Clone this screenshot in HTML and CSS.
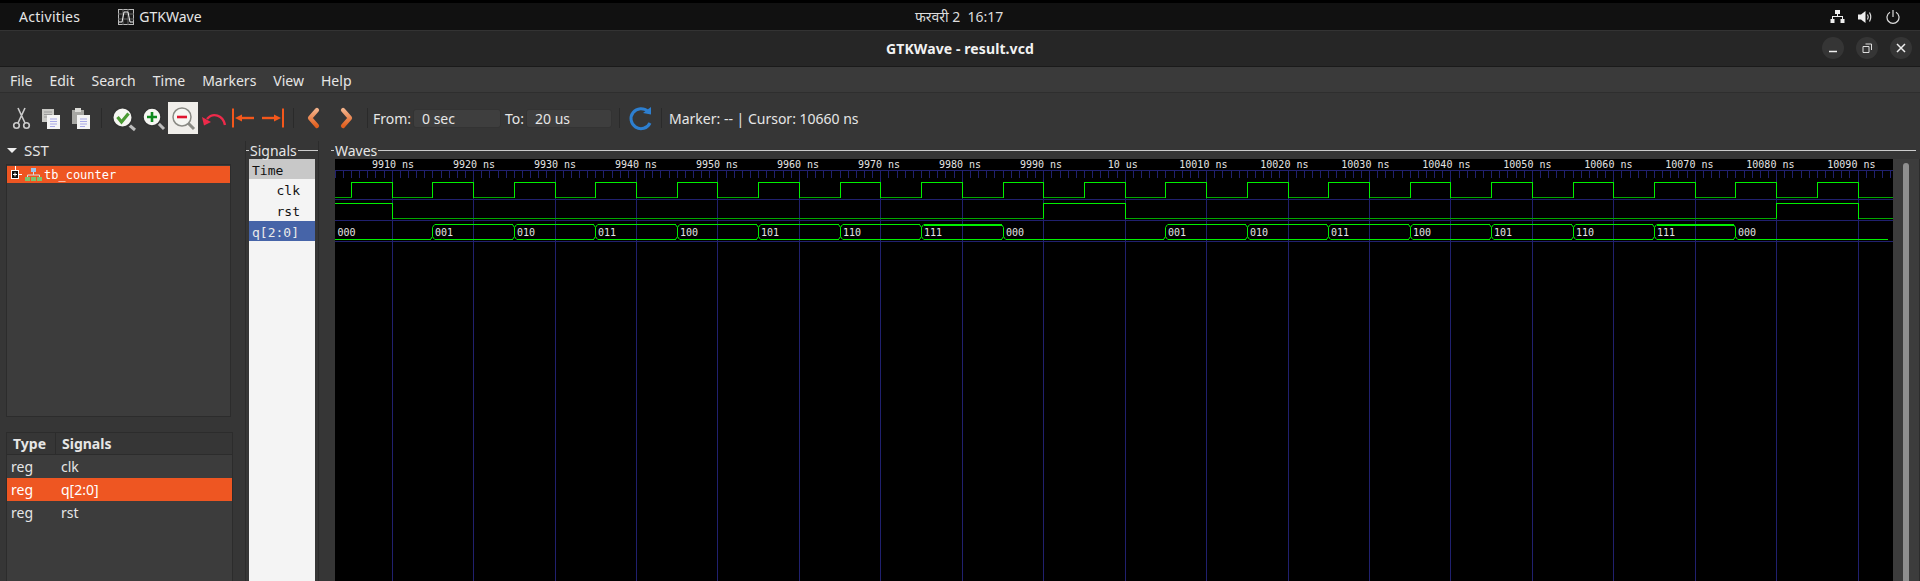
FILE: index.html
```html
<!DOCTYPE html>
<html>
    <head>
        <title>GTKWave - result.vcd</title>
        <link rel="stylesheet" href="styles.css">
    </head>
    <body>
        <div class="topbar">
            <span class="activities">Activities</span>
            <span class="app-name">
                <svg class="app-icon" width="16" height="16" viewBox="0 0 16 16">
                    <rect x="0.5" y="0.5" width="15" height="15" fill="#1c1c1c" stroke="#bbb"/>
                    <path d="M0 5H16M0 10H16M5 0V16M10 0V16" stroke="#666"/>
                    <path d="M1 13H4L6 3H10L12 13H15" fill="none" stroke="#eee"/>
                </svg>
                GTKWave
            </span>
            <span class="clock">फरवरी 2&nbsp;&nbsp;16:17</span>
            <span class="tray">
                <svg width="15" height="14" viewBox="0 0 15 14">
                    <path d="M5 0H10V4H8V6H13V9H14.500V13H10.500V9H12V7H3V9H4.500V13H0.500V9H2V6H7V4H5Z" fill="#eee"/>
                </svg>
                <svg width="15" height="14" viewBox="0 0 15 14">
                    <path d="M0 4.500H3L7.500 1V13L3 9.500H0Z" fill="#eee"/>
                    <path d="M9.500 4.500Q11 7 9.500 9.500M11.500 2.500Q14 7 11.500 11.500" fill="none" stroke="#ddd" stroke-width="1.200"/>
                </svg>
                <svg width="14" height="14" viewBox="0 0 14 14">
                    <path d="M4 2.200A6 6 0 1 0 10 2.200M7 0V7" fill="none" stroke="#ddd" stroke-width="1.200"/>
                </svg>
            </span>
        </div>

        <div class="titlebar">
            <span class="title">GTKWave - result.vcd</span>
            <span class="win-buttons">
                <span class="win-btn">
                    <svg width="10" height="10" viewBox="0 0 10 10"><path d="M1 8.500H9" stroke="#eee" stroke-width="1.500"/></svg>
                </span>
                <span class="win-btn">
                    <svg width="10" height="10" viewBox="0 0 10 10"><path d="M1 3.500H7V9.500H1ZM3.500 1H9.500V7" fill="none" stroke="#ddd"/></svg>
                </span>
                <span class="win-btn">
                    <svg width="10" height="10" viewBox="0 0 10 10"><path d="M1 1L9 9M9 1L1 9" stroke="#eee" stroke-width="1.500"/></svg>
                </span>
            </span>
        </div>

        <div class="menubar">
            <span>File</span><span>Edit</span><span>Search</span><span>Time</span><span>Markers</span><span>View</span><span>Help</span>
        </div>

        <div class="toolbar">
            <span class="tool">
                <svg width="30" height="32" viewBox="0 0 30 32">
                    <path d="M12 6L19 21M19 6L12 21" stroke="#ccc" stroke-width="1.600" fill="none"/>
                    <circle cx="10.500" cy="23.500" r="2.800" fill="none" stroke="#ccc" stroke-width="1.600"/>
                    <circle cx="20.500" cy="23.500" r="2.800" fill="none" stroke="#ccc" stroke-width="1.600"/>
                </svg>
            </span>
            <span class="tool">
                <svg width="30" height="32" viewBox="0 0 30 32">
                    <path d="M6 7H18V20H6Z" fill="#c9c9c5"/>
                    <path d="M8 10H16M8 12.500H16M8 15H16" stroke="#999"/>
                    <path d="M11 13H24V27H11Z" fill="#f4f4f4"/>
                    <path d="M14 17H21M14 19.500H21M14 22H21M14 24.500H19" stroke="#a8a8e8"/>
                </svg>
            </span>
            <span class="tool">
                <svg width="30" height="32" viewBox="0 0 30 32">
                    <path d="M6 8H18V22H6Z" fill="#a8a8a4"/>
                    <path d="M9 6H15V10H9Z" fill="#dcdcd8"/>
                    <path d="M11 13H24V27H11Z" fill="#f4f4f4"/>
                    <path d="M14 17H21M14 19.500H21M14 22H21M14 24.500H19" stroke="#a8a8e8"/>
                </svg>
            </span>
            <span class="sep"></span>
            <span class="tool tool-after-sep">
                <svg width="30" height="32" viewBox="0 0 30 32">
                    <path d="M20 22L27 28" stroke="#bbb" stroke-width="3"/>
                    <circle cx="14.500" cy="15.500" r="10" fill="#f6f6f2" stroke="#333" stroke-width="2"/>
                    <path d="M9.500 15L13.500 20L20.500 11.500" fill="none" stroke="#4a9a32" stroke-width="3.200"/>
                </svg>
            </span>
            <span class="tool">
                <svg width="30" height="32" viewBox="0 0 30 32">
                    <path d="M20 21L26 27" stroke="#bbb" stroke-width="3"/>
                    <circle cx="14" cy="15" r="9" fill="#f6f6f2" stroke="#333" stroke-width="1.500"/>
                    <path d="M14 10V20M9 15H19" stroke="#0f8a1e" stroke-width="2.600"/>
                </svg>
            </span>
            <span class="tool tool-active">
                <svg width="30" height="32" viewBox="0 0 30 32">
                    <path d="M20 21L26 27" stroke="#8a8a84" stroke-width="3"/>
                    <circle cx="14" cy="15" r="9" fill="#f6f6f2" stroke="#8a8a84" stroke-width="1.500"/>
                    <path d="M9 15H19" stroke="#e0142e" stroke-width="2.600"/>
                </svg>
            </span>
            <span class="tool">
                <svg width="30" height="32" viewBox="0 0 30 32">
                    <path d="M27 23C25 13 15 10 9 17" fill="none" stroke="#ee2a4a" stroke-width="2.400"/>
                    <path d="M4 15L6 23.500L13 20Z" fill="#ee2a4a"/>
                </svg>
            </span>
            <span class="tool">
                <svg width="30" height="32" viewBox="0 0 30 32">
                    <path d="M5 6.500V25.500" stroke="#f4571b" stroke-width="2"/>
                    <path d="M12 16H26" stroke="#f4571b" stroke-width="2.400"/>
                    <path d="M7 16L14 12.500V19.500Z" fill="#f4571b"/>
                </svg>
            </span>
            <span class="tool">
                <svg width="30" height="32" viewBox="0 0 30 32">
                    <path d="M25 6.500V25.500" stroke="#f4571b" stroke-width="2"/>
                    <path d="M4 16H18" stroke="#f4571b" stroke-width="2.400"/>
                    <path d="M23 16L16 12.500V19.500Z" fill="#f4571b"/>
                </svg>
            </span>
            <span class="sep"></span>
            <span class="tool">
                <svg width="30" height="32" viewBox="0 0 30 32">
                    <defs>
                        <linearGradient id="chev" x1="0" y1="0" x2="0" y2="1">
                            <stop offset="0" stop-color="#f2b088"/>
                            <stop offset="1" stop-color="#e2601f"/>
                        </linearGradient>
                    </defs>
                    <path d="M18 8L11 16L18 24" fill="none" stroke="url(#chev)" stroke-width="4.200" stroke-linecap="round" stroke-linejoin="round"/>
                </svg>
            </span>
            <span class="tool tool-next">
                <svg width="30" height="32" viewBox="0 0 30 32">
                    <path d="M11 8L18 16L11 24" fill="none" stroke="url(#chev)" stroke-width="4.200" stroke-linecap="round" stroke-linejoin="round"/>
                </svg>
            </span>
            <span class="sep"></span>
            <label class="field-label from-label">From:</label>
            <span class="field field-from">0 sec</span>
            <label class="field-label to-label">To:</label>
            <span class="field field-to">20 us</span>
            <span class="sep sep-reload"></span>
            <span class="tool tool-reload">
                <svg width="30" height="32" viewBox="0 0 30 32">
                    <path d="M22 9.500A10 10 0 1 0 24 21" fill="none" stroke="#2d7fd0" stroke-width="3"/>
                    <path d="M17 11L25 12.500L25 5Z" fill="#2d7fd0"/>
                </svg>
            </span>
            <span class="sep sep-marker"></span>
            <span class="status">Marker: -- | Cursor: 10660 ns</span>
        </div>

        <div class="main">
            <div class="sst-pane">
                <div class="sst-head"><span class="caret"></span>SST</div>
                <div class="tree-box">
                    <div class="tree-row">
                        <svg class="tree-plus" width="12" height="17" viewBox="0 0 12 17">
                            <path d="M5.500 0V5M8 8.500H12" stroke="#fff"/>
                            <rect x="1.500" y="4.500" width="7" height="8" fill="#111" stroke="#fff"/>
                            <path d="M3 8.500H7M5 6.500V10.500" stroke="#fff"/>
                        </svg>
                        <svg class="tree-icon" width="17" height="14" viewBox="0 0 17 14">
                            <rect x="6" y="0" width="5" height="4" fill="#9cc4ec"/>
                            <path d="M8.500 4V7M2.500 9V7H14.500V9" fill="none" stroke="#ddd"/>
                            <rect x="0" y="9" width="5" height="4" fill="#7cc46c"/>
                            <rect x="6" y="9" width="5" height="4" fill="#7cc46c"/>
                            <rect x="12" y="9" width="5" height="4" fill="#7cc46c"/>
                        </svg>
                        <span class="tree-name">tb_counter</span>
                    </div>
                </div>
                <div class="list-box">
                    <div class="list-head">
                        <span class="col-type">Type</span>
                        <span class="col-name">Signals</span>
                    </div>
                    <div class="list-row"><span class="col-type">reg</span><span class="col-name">clk</span></div>
                    <div class="list-row selected"><span class="col-type">reg</span><span class="col-name">q[2:0]</span></div>
                    <div class="list-row"><span class="col-type">reg</span><span class="col-name">rst</span></div>
                </div>
            </div>

            <div class="signals-pane">
                <div class="frame-head">Signals</div>
                <div class="signal-list">
                    <div class="signal sig-time">Time</div>
                    <div class="signal sig-right">clk</div>
                    <div class="signal sig-right">rst</div>
                    <div class="signal sig-selected">q[2:0]</div>
                </div>
            </div>

            <div class="waves-pane">
                <div class="frame-head">Waves</div>
                <div class="waves-body">
                    <svg id="waves" class="waves-canvas" width="1558" height="422" viewBox="0 0 1558 422"></svg>
                    <div class="scrollbar"><div class="thumb"></div></div>
                </div>
            </div>
        </div>
        <script src="waves.js"></script>
    </body>
</html>
```

FILE: styles.css
```css
:root {
    --orange: #ee5622;
    --panel: #3c3c3c;
    --bar: #363636;
    --edge: #2c2c2c;
    --font-clr: #e6e6e6;
}

html, body {
    margin: 0;
    height: 581px;
    overflow: hidden;
}

body {
    background-color: var(--bar);
    color: var(--font-clr);
    font-family: 'Noto Sans', 'Open Sans', sans-serif;
    font-size: 14px;
}

svg {
    display: block;
}

/* gnome top bar */
.topbar {
    height: 27px;
    border-top: 3px solid #000;
    border-bottom: 1px solid #333;
    background-color: #111;
    display: flex;
    align-items: center;
    position: relative;
    font-size: 14px;
}
.activities {
    margin-left: 19px;
    letter-spacing: 0.3px;
}
.app-name {
    margin-left: 38px;
    display: flex;
    align-items: center;
    gap: 5px;
}
.clock {
    position: absolute;
    left: 915px;
    top: 4px;
    font-size: 14px;
    color: #ddd;
}
.tray {
    margin-left: auto;
    margin-right: 20px;
    display: flex;
    gap: 13px;
}

/* window title */
.titlebar {
    height: 35px;
    border-bottom: 1px solid #1a1a1a;
    background-color: #262626;
    display: flex;
    align-items: center;
    justify-content: center;
    position: relative;
}
.title {
    font-weight: bold;
    font-size: 14px;
    letter-spacing: 0.1px;
    color: #f2f2f2;
}
.win-buttons {
    position: absolute;
    right: 8px;
    top: 6px;
    display: flex;
    gap: 12px;
}
.win-btn {
    width: 22px;
    height: 22px;
    border-radius: 50%;
    background-color: #353535;
    display: flex;
    align-items: center;
    justify-content: center;
}

.menubar {
    height: 24px;
    padding-top: 1px;
    border-bottom: 1px solid #2e2e2e;
    background-color: #3a3a3a;
    display: flex;
    align-items: center;
    padding-left: 10px;
    gap: 17px;
    font-size: 14px;
}

.toolbar {
    height: 46px;
    padding-top: 2px;
    background-color: var(--bar);
    display: flex;
    align-items: center;
    padding-left: 6px;
}
.tool {
    width: 30px;
    height: 32px;
    flex: none;
}
.tool-active {
    background-color: #f0eeea;
}
.tool-after-sep {
    margin-left: 1px;
}
.tool-next {
    margin-left: 3px;
}
.sep {
    width: 1px;
    height: 20px;
    margin: 0 5px;
    background-color: #2a2a2a;
    flex: none;
}
.field-label {
    font-size: 14px;
}
.from-label {
    width: 40px;
}
.to-label {
    margin-left: 4px;
    width: 21px;
}
.field {
    height: 17px;
    line-height: 17px;
    background-color: #3e3e3e;
    border: 1px solid #333;
    border-radius: 3px;
    padding-left: 8px;
    font-size: 14px;
    box-sizing: content-box;
}
.field-from {
    width: 78px;
}
.field-to {
    width: 76px;
}
.sep-reload {
    margin-left: 7px;
    margin-right: 6px;
}
.tool-reload {
    width: 30px;
}
.sep-marker {
    margin-left: 5px;
    margin-right: 7px;
}
.status {
    font-size: 14px;
}

.main {
    display: flex;
    height: 440px;
}

.sst-pane {
    width: 245px;
    flex: none;
}
.sst-head {
    height: 18px;
    padding-bottom: 5px;
    padding-left: 7px;
    display: flex;
    align-items: center;
    font-size: 15px;
}
.caret {
    width: 0;
    height: 0;
    border-left: 5px solid transparent;
    border-right: 5px solid transparent;
    border-top: 5px solid #eee;
    margin-right: 7px;
}
.tree-box {
    margin-left: 6px;
    width: 223px;
    height: 251px;
    background-color: var(--panel);
    border: 1px solid var(--edge);
}
.tree-row {
    margin-top: 1px;
    height: 17px;
    background-color: var(--orange);
    display: flex;
    align-items: center;
    color: #fff;
    font-family: 'DejaVu Sans Mono', monospace;
    font-size: 12px;
}
.tree-plus {
    margin-left: 3px;
}
.tree-icon {
    margin-left: 3px;
}
.tree-name {
    margin-left: 2px;
}
.list-box {
    margin-left: 6px;
    margin-top: 15px;
    width: 225px;
    height: 148px;
    background-color: var(--panel);
    border: 1px solid var(--edge);
    border-bottom: 0;
}
.list-head {
    height: 21px;
    background-color: #363636;
    border-bottom: 1px solid var(--edge);
    display: flex;
    align-items: center;
    font-weight: bold;
    font-size: 14px;
}
.list-row {
    height: 23px;
    display: flex;
    align-items: center;
}
.list-row.selected {
    background-color: var(--orange);
    color: #fff;
}
.col-type {
    width: 49px;
    padding-left: 4px;
    box-sizing: border-box;
    flex: none;
}
.list-head .col-type {
    padding-left: 6px;
    border-right: 1px solid var(--edge);
    height: 21px;
    line-height: 21px;
}
.list-head .col-name {
    padding-left: 6px;
}
.list-row .col-name {
    padding-left: 5px;
}

.signals-pane {
    width: 72px;
    flex: none;
    border-left: 1px solid var(--edge);
    border-right: 1px solid var(--edge);
}
.frame-head {
    height: 18px;
    display: flex;
    align-items: center;
    gap: 1px;
    font-size: 14px;
}
.frame-head::before {
    content: '';
    width: 3px;
    height: 1px;
    background-color: #ccc;
}
.frame-head::after {
    content: '';
    flex: 1;
    height: 1px;
    background-color: #ccc;
}
.signal-list {
    margin-left: 3px;
    width: 66px;
    height: 422px;
    background-color: #f4f4f4;
    font-family: 'DejaVu Sans Mono', monospace;
    font-size: 13px;
    color: #111;
}
.signal {
    height: 20px;
    line-height: 24px;
    padding: 0 3px;
    margin-bottom: 1px;
}
.sig-time {
    background-color: #c8c8c8;
    margin-bottom: 0;
}
.sig-right {
    text-align: right;
    padding-right: 15px;
}
.sig-selected {
    background-color: #4664a8;
    color: #eaeaea;
}

.waves-pane {
    margin-left: 16px;
    flex: 1;
    min-width: 0;
}
.waves-pane .frame-head {
    margin-left: -4px;
    margin-right: 4px;
    gap: 1px;
}
.waves-body {
    display: flex;
    height: 422px;
}
.waves-canvas {
    flex: none;
    background-color: #000;
}
.scrollbar {
    flex: 1;
    background-color: var(--panel);
    padding: 4px 0 0 10px;
    border-right: 1px solid var(--edge);
}
.thumb {
    width: 6px;
    height: 420px;
    background-color: #8f8f8f;
    border-radius: 3px 3px 0 0;
}
```

FILE: waves.js
```js
const svg = document.getElementById('waves');
const NS = 'http://www.w3.org/2000/svg';

// svg origin is at 335,159 on the page
const X0 = 391.7 - 335;
const PX_PER_NS = 8.144;
const W = 1558;
const H = 422;
const GRID = '#20206e';
const BRIGHT = '#00f000';
const DIM = '#00a800';

function xOf(t) {
    return Math.round(X0 + (t - 9910) * PX_PER_NS) + 0.5;
}

function add(tag, attrs, text) {
    const el = document.createElementNS(NS, tag);
    for (const k in attrs) el.setAttribute(k, attrs[k]);
    if (text) el.textContent = text;
    svg.appendChild(el);
    return el;
}

function line(d, color, width) {
    add('path', {d: d, stroke: color, fill: 'none', 'stroke-width': width || 1, 'shape-rendering': 'crispEdges'});
}

function label(x, y, text) {
    add('text', {
        x: x, y: y, fill: '#e4e4e4', 'font-family': 'DejaVu Sans Mono, monospace',
        'font-size': 10
    }, text);
}

// labels step 81px per 10ns, a bit less than the grid does
function timeLabelX(t) {
    const x = 37 + (t - 9910) * 8.1;
    if (t === 10000) return x + 6.7;
    return t > 10000 ? x - 2.7 : x;
}

// grid and ruler
let grid = 'M0 11.500H' + W + 'M0 40.500H' + W + 'M0 61.500H' + W + 'M0 82.500H' + W;
for (let t = 9910; t <= 10090; t += 10) {
    grid += 'M' + xOf(t) + ' 11V' + H;
    for (let k = -9; k < 10; k++) {
        const x = xOf(t + k);
        if (k !== 0 && x > 0 && x < W && (k > 0 || t === 9910)) grid += 'M' + x + ' 11V19';
    }
    label(timeLabelX(t), 9, t === 10000 ? '10 us' : t + ' ns');
}
line(grid, GRID);

// clk, 10 ns period
for (let t = 9900; t < 10100; t += 10) {
    const rise = xOf(t + 5);
    const fall = xOf(t + 10);
    const next = Math.min(xOf(t + 15), W);
    line('M' + rise + ' 23.500H' + fall, BRIGHT);
    line('M' + rise + ' 23V38.500M' + fall + ' 23V38.500', BRIGHT);
    line('M' + Math.max(fall, 0) + ' 38.500H' + next, DIM);
}
line('M0 38.500H' + xOf(9905), DIM);

// rst
line('M0 44.500H' + xOf(9910) + 'M' + xOf(9990) + ' 44.500H' + xOf(10000) + 'M' + xOf(10080) + ' 44.500H' + xOf(10090), BRIGHT);
line('M' + xOf(9910) + ' 44V59.500M' + xOf(9990) + ' 44V59.500M' + xOf(10000) + ' 44V59.500M' + xOf(10080) + ' 44V59.500M' + xOf(10090) + ' 44V59.500', BRIGHT);
line('M' + xOf(9910) + ' 59.500H' + xOf(9990) + 'M' + xOf(10000) + ' 59.500H' + xOf(10080) + 'M' + xOf(10090) + ' 59.500H' + W, DIM);

// q[2:0]
const vals = [
    [9900, '000'], [9915, '001'], [9925, '010'], [9935, '011'], [9945, '100'],
    [9955, '101'], [9965, '110'], [9975, '111'], [9985, '000'],
    [10005, '001'], [10015, '010'], [10025, '011'], [10035, '100'],
    [10045, '101'], [10055, '110'], [10065, '111'], [10075, '000']
];
const TOP = 65.5;
const BOT = 80.5;
vals.forEach(function (v, i) {
    const start = i === 0 ? 0 : xOf(v[0]);
    const end = i + 1 < vals.length ? xOf(vals[i + 1][0]) : W - 3;
    const inset = i === 0 ? 0 : 2;
    const zero = v[1] === '000';
    line('M' + (start + inset) + ' ' + BOT + 'H' + (end - 2), BRIGHT);
    if (!zero) {
        line('M' + (start + inset) + ' ' + TOP + 'H' + (end - 2), BRIGHT, v[1] === '111' ? 2 : 1);
    }
    if (i > 0) {
        // small crossing where the value changes
        const prevZero = vals[i - 1][1] === '000';
        let d = 'M' + (start - 2) + ' ' + BOT + 'L' + start + ' ' + (BOT - 3) + 'V' + (TOP + 3);
        if (!prevZero) d += 'L' + (start - 2) + ' ' + TOP;
        if (!zero) d += 'M' + start + ' ' + (TOP + 3) + 'L' + (start + 2) + ' ' + TOP;
        d += 'M' + start + ' ' + (BOT - 3) + 'L' + (start + 2) + ' ' + BOT;
        add('path', {d: d, stroke: BRIGHT, fill: 'none'});
    }
    label((i === 0 ? 0 : start) + 2.5, 77, v[1]);
});
```
